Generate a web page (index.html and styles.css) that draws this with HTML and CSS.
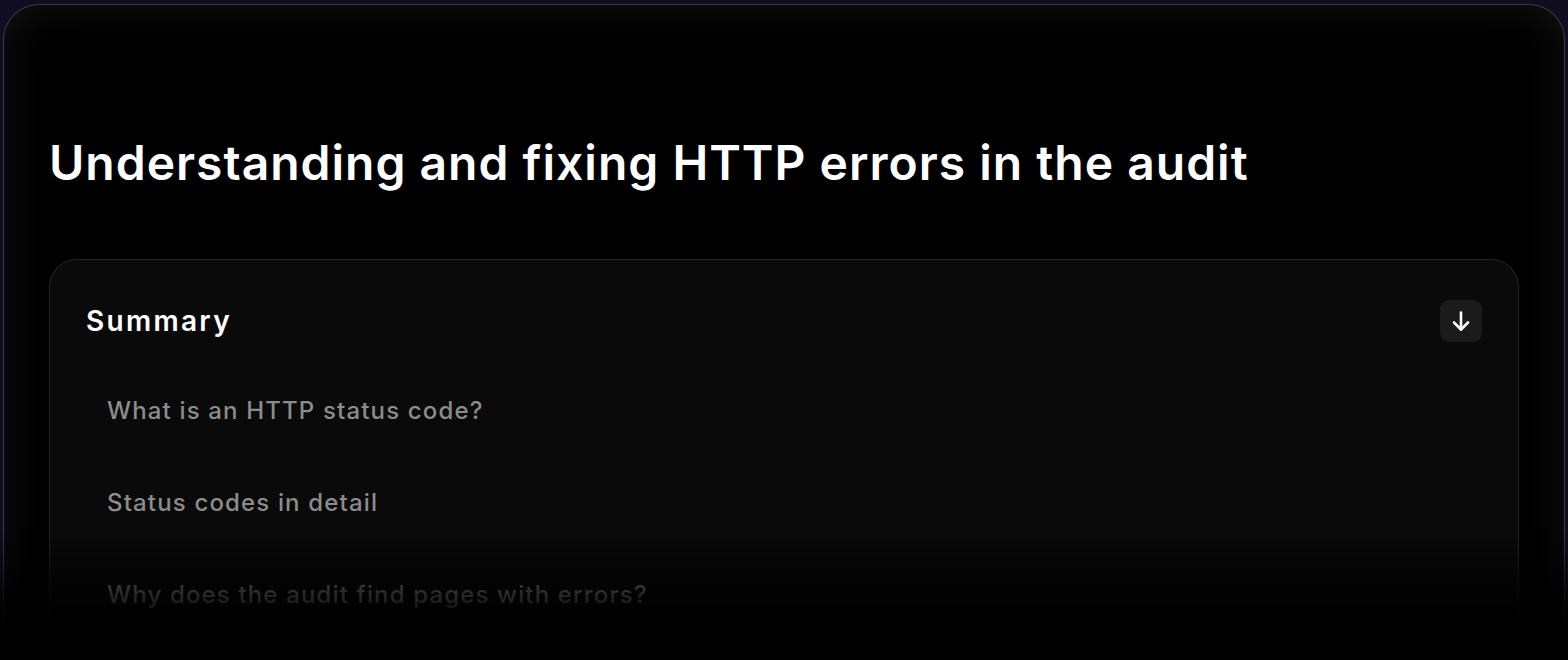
FILE: index.html
```html
<!DOCTYPE html>
<html lang="en">
<head>
<meta charset="utf-8">
<title>HTTP errors</title>
<link rel="stylesheet" href="styles.css">
</head>
<body>
<div class="frame">
  <h1 class="title">Understanding and fixing HTTP errors in the audit</h1>
  <section class="summary">
    <div class="summary-head">
      <h2 class="summary-title">Summary</h2>
      <button class="toggle" aria-label="Expand">
        <svg width="20" height="22" viewBox="0 0 20 22" fill="none" stroke="#fff" stroke-width="2.6" stroke-linecap="round" stroke-linejoin="round"><path d="M10 2.5v17"/><path d="M3 12.5l7 7 7-7"/></svg>
      </button>
    </div>
    <ul class="toc">
      <li>What is an HTTP status code?</li>
      <li>Status codes in detail</li>
      <li>Why does the audit find pages with errors?</li>
    </ul>
  </section>
</div>
<div class="fade"></div>
</body>
</html>
```
FILE: styles.css
```css
html, body {
  margin: 0;
  padding: 0;
  height: 100%;
  overflow: hidden;
}
body {
  background: #110d20;
  font-family: Inter, "Noto Sans", sans-serif;
}
.frame {
  margin: 4px 3px 0 3px;
  height: 656px;
  box-sizing: border-box;
  border: 1px solid #3d3d3f;
  border-bottom: none;
  border-radius: 36px 36px 0 0;
  background: #000;
  box-shadow: inset 0 0 44px rgba(255, 255, 255, 0.075);
  padding: 128px 45px 0 45px;
  display: flex;
  flex-direction: column;
  overflow: hidden;
}
.title {
  margin: 0;
  color: #fff;
  font-size: 48px;
  line-height: 60px;
  font-weight: 600;
  letter-spacing: 1px;
}
.summary {
  margin-top: 66px;
  flex: 1;
  border: 1px solid #242424;
  border-bottom: none;
  border-radius: 28px 28px 0 0;
  background: #0a0a0a;
  padding: 40px 36px 0 36px;
  overflow: hidden;
}
.summary-head {
  display: flex;
  align-items: center;
  justify-content: space-between;
  height: 42px;
}
.summary-title {
  margin: 0;
  color: #fff;
  font-size: 28px;
  font-weight: 600;
  line-height: 42px;
  letter-spacing: 2.3px;
}
.toggle {
  width: 42px;
  height: 42px;
  border: none;
  border-radius: 9px;
  background: #1b1b1b;
  display: flex;
  align-items: center;
  justify-content: center;
  padding: 0;
}
.toc {
  list-style: none;
  margin: 23px 0 0 0;
  padding: 0 0 0 21px;
}
.toc li {
  color: #8c8c8c;
  font-size: 24px;
  font-weight: 500;
  line-height: 92px;
  letter-spacing: 1.15px;
}
.fade {
  position: fixed;
  left: 0;
  right: 0;
  bottom: 0;
  height: 130px;
  background: linear-gradient(to bottom, rgba(0,0,0,0) 0%, rgba(0,0,0,0.72) 50%, #000 76%);
  pointer-events: none;
}
```
